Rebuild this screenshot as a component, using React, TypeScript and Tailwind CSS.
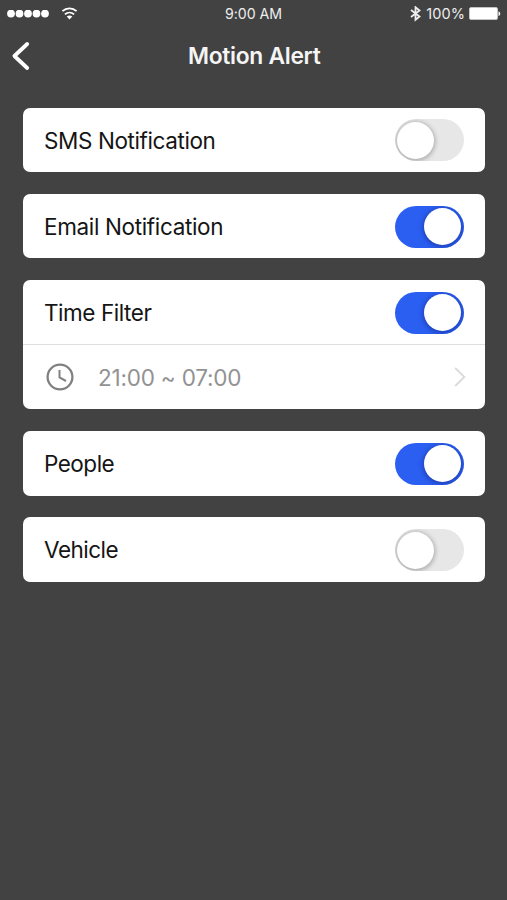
import type { ReactNode } from "react";

function Toggle({ on }: { on: boolean }) {
  return (
    <span
      role="switch"
      aria-checked={on}
      className={
        on
          ? "flex h-[42px] w-[69px] items-center justify-end overflow-hidden rounded-full bg-[#2b5ff2] pr-[2.5px]"
          : "flex h-[42px] w-[69px] items-center justify-start overflow-hidden rounded-full bg-[#e7e7e7] pl-[2px]"
      }
    >
      <span
        className={
          on
            ? "size-[37px] rounded-full bg-white shadow-[0_1px_5px_1px_rgba(0,0,60,0.35)]"
            : "size-[37px] rounded-full bg-white shadow-[0_1px_5px_1px_rgba(0,0,0,0.28)]"
        }
      />
    </span>
  );
}

function Card({ children }: { children: ReactNode }) {
  return <section className="overflow-hidden rounded-[7px] bg-white">{children}</section>;
}

function SettingRow({ label, on, spacing }: { label: string; on: boolean; spacing: string }) {
  return (
    <div className="flex h-[64.6px] items-center justify-between pt-[1.2px] pr-[21.5px] pl-[21.5px]">
      <span className={`pt-[0.6px] text-[22.5px] leading-7 whitespace-nowrap text-[#151515] ${spacing}`}>{label}</span>
      <Toggle on={on} />
    </div>
  );
}

function StatusBar() {
  return (
    <div className="grid h-[27px] grid-cols-[1fr_auto_1fr] items-center text-[14px] text-[#ededed]">
      <div className="flex items-center pl-[7px]">
        <svg width="43" height="8" viewBox="0 0 43 8" fill="#fff">
          {[4, 12.5, 21, 29.5, 38].map((cx) => (
            <circle key={cx} cx={cx} cy="3.6" r="3.9" />
          ))}
        </svg>
        <svg className="ml-[10.5px]" width="17" height="14" viewBox="0 0 17 14" fill="none" stroke="#fff">
          <path d="M1.4 4.2C5.5 0.4 11.5 0.4 15.6 4.2" strokeWidth="1.8" />
          <path d="M3.9 7.4C6.6 4.9 10.4 4.9 13.1 7.4" strokeWidth="1.8" />
          <path d="M8.5 12.4L5.7 9.6C7.4 8 9.6 8 11.3 9.6Z" fill="#fff" stroke="none" />
        </svg>
      </div>
      <span className="text-[14.2px] tracking-[-0.05px]">9:00 AM</span>
      <div className="flex items-center justify-end pr-[6px]">
        <svg width="11" height="16" viewBox="0 0 11 16" fill="none" stroke="#eee" strokeWidth="1.8">
          <path d="M1 4L9.5 10.5L5.5 13.8V1.2L9.5 4.5L1 11" />
        </svg>
        <span className="mr-[4px] ml-[5.5px] text-[14.5px] tracking-[0.1px]">100%</span>
        <svg width="32" height="14" viewBox="0 0 32 14">
          <rect x="0.5" y="0.5" width="28" height="12" rx="1.5" fill="#fff" stroke="#c4c4c4" strokeWidth="1" />
          <path d="M29.5 4.2C31.8 4.9 31.8 8.3 29.5 9Z" fill="#fff" />
        </svg>
      </div>
    </div>
  );
}

export default function App() {
  return (
    <main className="h-[900px] w-[507px] overflow-hidden bg-[#424242] font-['Inter','Liberation_Sans',sans-serif]">
      <StatusBar />
      <header className="grid h-[59px] grid-cols-[1fr_auto_1fr] items-center">
        <svg className="ml-[11px]" width="20" height="32" viewBox="0 0 20 32" fill="none" stroke="#fff" strokeWidth="3.8" strokeLinecap="round" strokeLinejoin="round">
          <path d="M16.2 3L3.4 15L16.2 27" />
        </svg>
        <h1 className="pb-px pl-[1.5px] text-[22.8px] font-semibold tracking-[-0.3px] text-[#f5f5f5]">Motion Alert</h1>
      </header>
      <div className="mt-[21.5px] flex flex-col gap-[21.7px] pr-[22px] pl-[22.5px]">
        <Card>
          <SettingRow label="SMS Notification" on={false} spacing="tracking-[-0.4px]" />
        </Card>
        <Card>
          <SettingRow label="Email Notification" on spacing="tracking-[-0.35px]" />
        </Card>
        <Card>
          <SettingRow label="Time Filter" on spacing="tracking-[-0.45px]" />
          <div className="-mt-px flex h-[65.6px] items-center border-t border-[#dedede] pr-[19.5px] pl-[23.5px]">
            <svg width="28" height="28" viewBox="0 0 28 28" fill="none" stroke="#808080" strokeWidth="2.3">
              <circle cx="14" cy="14" r="12.4" />
              <path d="M13.5 7V14.5L20 18" strokeWidth="2" />
            </svg>
            <span className="ml-[24px] flex-1 pt-[2px] text-[22.5px] leading-7 tracking-[-0.2px] text-[#929292]">21:00 ~ 07:00</span>
            <svg width="12" height="20" viewBox="0 0 12 20" fill="none" stroke="#dadada" strokeWidth="1.8">
              <path d="M1.2 1L10.4 10L1.2 19" />
            </svg>
          </div>
        </Card>
        <Card>
          <SettingRow label="People" on spacing="tracking-[-0.5px]" />
        </Card>
        <Card>
          <SettingRow label="Vehicle" on={false} spacing="tracking-[-0.5px]" />
        </Card>
      </div>
    </main>
  );
}
